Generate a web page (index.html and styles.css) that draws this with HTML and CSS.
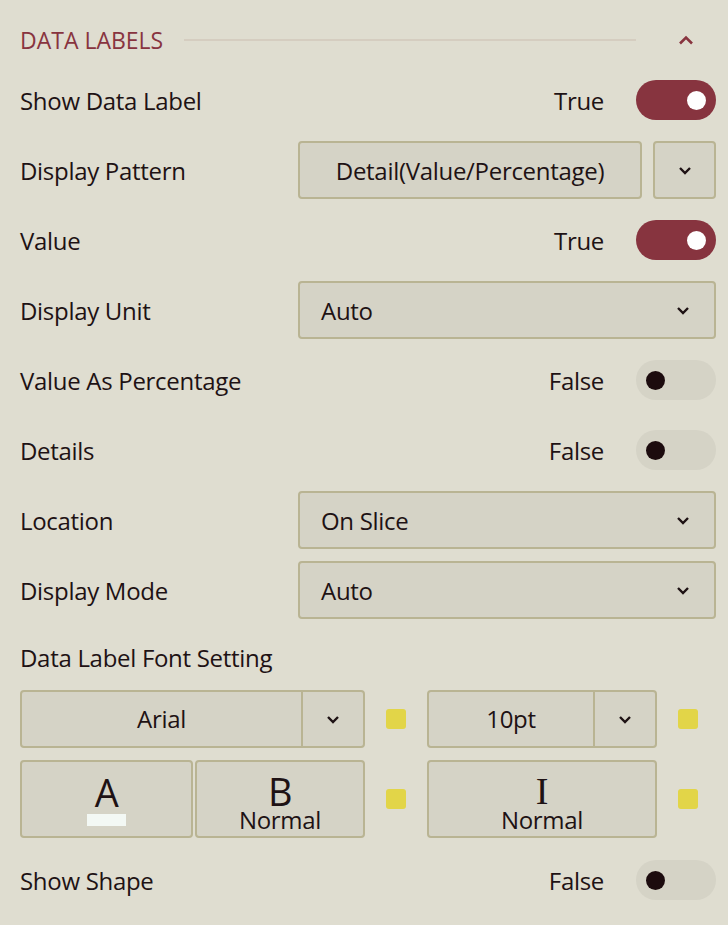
FILE: index.html
```html
<!DOCTYPE html>
<html lang="en">
<head>
    <meta charset="UTF-8">
    <meta name="viewport" content="width=device-width, initial-scale=1.0">
    <title>Data Labels</title>
    <link rel="stylesheet" href="styles.css">
</head>
<body>
    <div class="panel">
        <!-- Cabeçalho da seção -->
        <div class="section-head">
            <span class="section-title">DATA LABELS</span>
            <span class="section-line"></span>
            <svg class="chev-up" width="16" height="10" viewBox="0 0 16 10"><path d="M2 8.5 L8 2.5 L14 8.5" fill="none" stroke="#88343f" stroke-width="2.6"/></svg>
        </div>

        <div class="row">
            <div class="label">Show Data Label</div>
            <div class="value">True</div>
            <div class="toggle on"><span class="knob"></span></div>
        </div>

        <div class="row">
            <div class="label">Display Pattern</div>
            <div class="control btn-wide">Detail(Value/Percentage)</div>
            <div class="control btn-arrow">
                <svg width="14" height="9" viewBox="0 0 14 9"><path d="M2 2 L7 7 L12 2" fill="none" stroke="#1e1214" stroke-width="2.4"/></svg>
            </div>
        </div>

        <div class="row">
            <div class="label">Value</div>
            <div class="value">True</div>
            <div class="toggle on"><span class="knob"></span></div>
        </div>

        <div class="row">
            <div class="label">Display Unit</div>
            <div class="control select">
                <span>Auto</span>
                <svg width="14" height="9" viewBox="0 0 14 9"><path d="M2 2 L7 7 L12 2" fill="none" stroke="#1e1214" stroke-width="2.4"/></svg>
            </div>
        </div>

        <div class="row">
            <div class="label">Value As Percentage</div>
            <div class="value">False</div>
            <div class="toggle"><span class="knob"></span></div>
        </div>

        <div class="row">
            <div class="label">Details</div>
            <div class="value">False</div>
            <div class="toggle"><span class="knob"></span></div>
        </div>

        <div class="row">
            <div class="label">Location</div>
            <div class="control select">
                <span>On Slice</span>
                <svg width="14" height="9" viewBox="0 0 14 9"><path d="M2 2 L7 7 L12 2" fill="none" stroke="#1e1214" stroke-width="2.4"/></svg>
            </div>
        </div>

        <div class="row">
            <div class="label">Display Mode</div>
            <div class="control select">
                <span>Auto</span>
                <svg width="14" height="9" viewBox="0 0 14 9"><path d="M2 2 L7 7 L12 2" fill="none" stroke="#1e1214" stroke-width="2.4"/></svg>
            </div>
        </div>

        <div class="row row-caption">
            <div class="label">Data Label Font Setting</div>
        </div>

        <!-- Fonte e tamanho -->
        <div class="font-row">
            <div class="control group group-left">
                <div class="group-main">Arial</div>
                <div class="group-arrow">
                    <svg width="14" height="9" viewBox="0 0 14 9"><path d="M2 2 L7 7 L12 2" fill="none" stroke="#1e1214" stroke-width="2.4"/></svg>
                </div>
            </div>
            <span class="dot"></span>
            <div class="control group group-right">
                <div class="group-main">10pt</div>
                <div class="group-arrow">
                    <svg width="14" height="9" viewBox="0 0 14 9"><path d="M2 2 L7 7 L12 2" fill="none" stroke="#1e1214" stroke-width="2.4"/></svg>
                </div>
            </div>
            <span class="dot"></span>
        </div>

        <!-- Cor, peso e estilo -->
        <div class="font-row style-row">
            <div class="style-pair">
                <div class="control style-btn btn-a">
                    <span class="glyph">A</span>
                    <span class="swatch"></span>
                </div>
                <div class="control style-btn btn-b">
                    <span class="glyph">B</span>
                    <span class="caption">Normal</span>
                </div>
            </div>
            <span class="dot"></span>
            <div class="control style-btn btn-i">
                <span class="glyph glyph-i">I</span>
                <span class="caption">Normal</span>
            </div>
            <span class="dot"></span>
        </div>

        <div class="row last-row">
            <div class="label">Show Shape</div>
            <div class="value">False</div>
            <div class="toggle"><span class="knob"></span></div>
        </div>
    </div>
</body>
</html>
```

FILE: styles.css
```css
html, body {
    margin: 0;
    padding: 0;
    width: 100%;
    height: 100%;
    overflow: hidden;
}

body {
    font-family: "Open Sans", "Noto Sans", sans-serif;
    font-size: 24px;
    letter-spacing: -0.3px;
    color: #1e1214;
    background: #dfddd0;
}

.panel {
    padding: 15px 12px 0 20px;
}

.section-head {
    display: flex;
    align-items: center;
    height: 50px;
}

.section-title {
    font-size: 23px;
    letter-spacing: 0;
    color: #88343f;
}

.section-line {
    flex: 1;
    height: 2px;
    background: #d5cdc0;
    margin: 0 42px 0 21px;
}

.chev-up {
    margin-right: 22px;
}

.row {
    display: flex;
    align-items: center;
    height: 70px;
}

.label {
    width: 278px;
    flex-shrink: 0;
}

.value {
    margin-left: auto;
    margin-right: 32px;
}

.toggle {
    width: 80px;
    height: 40px;
    border-radius: 20px;
    background: #d5d3c6;
    display: flex;
    align-items: center;
    padding: 0 10px;
    box-sizing: border-box;
}

.toggle .knob {
    width: 19px;
    height: 19px;
    border-radius: 50%;
    background: #1c0b0e;
}

.toggle.on {
    background: #87343f;
    justify-content: flex-end;
}

.toggle.on .knob {
    background: #ffffff;
}

.control {
    background: #d5d3c6;
    border: 2px solid #b9b493;
    border-radius: 4px;
    box-sizing: border-box;
    height: 58px;
    display: flex;
    align-items: center;
}

.btn-wide {
    width: 344px;
    justify-content: center;
}

.btn-arrow {
    width: 63px;
    margin-left: 11px;
    justify-content: center;
}

.select {
    flex: 1;
    justify-content: space-between;
    padding: 0 24px 0 21px;
}

.row-caption {
    height: 65px;
}

.row-caption .label {
    width: auto;
}

.font-row {
    display: flex;
    align-items: center;
}

.group {
    padding: 0;
    flex-shrink: 0;
}

.group-left {
    width: 345px;
}

.group-right {
    width: 230px;
}

.group-main {
    flex: 1;
    text-align: center;
    height: 100%;
    line-height: 54px;
}

.group-arrow {
    width: 60px;
    height: 100%;
    border-left: 2px solid #b9b493;
    display: flex;
    align-items: center;
    justify-content: center;
}

.dot {
    width: 20px;
    height: 20px;
    border-radius: 3px;
    background: #e2d548;
    margin: 0 21px;
    flex-shrink: 0;
}

.dot:last-child {
    margin-right: 0;
}

.style-row {
    margin-top: 12px;
}

.style-pair {
    display: flex;
    width: 345px;
    gap: 2px;
    flex-shrink: 0;
}

.style-btn {
    height: 78px;
    flex-direction: column;
    justify-content: center;
    flex-shrink: 0;
    padding-top: 10px;
}

.btn-a {
    width: 173px;
    padding-top: 4px;
}

.btn-b {
    width: 170px;
}

.btn-i {
    width: 230px;
}

.glyph {
    font-size: 38px;
    line-height: 32px;
}

.glyph-i {
    font-family: "Liberation Serif", serif;
    font-size: 38px;
}

.caption {
    line-height: 26px;
}

.swatch {
    width: 39px;
    height: 12px;
    background: #f3f8f4;
    margin-top: 6px;
}

.last-row {
    margin-top: 7px;
}
```
